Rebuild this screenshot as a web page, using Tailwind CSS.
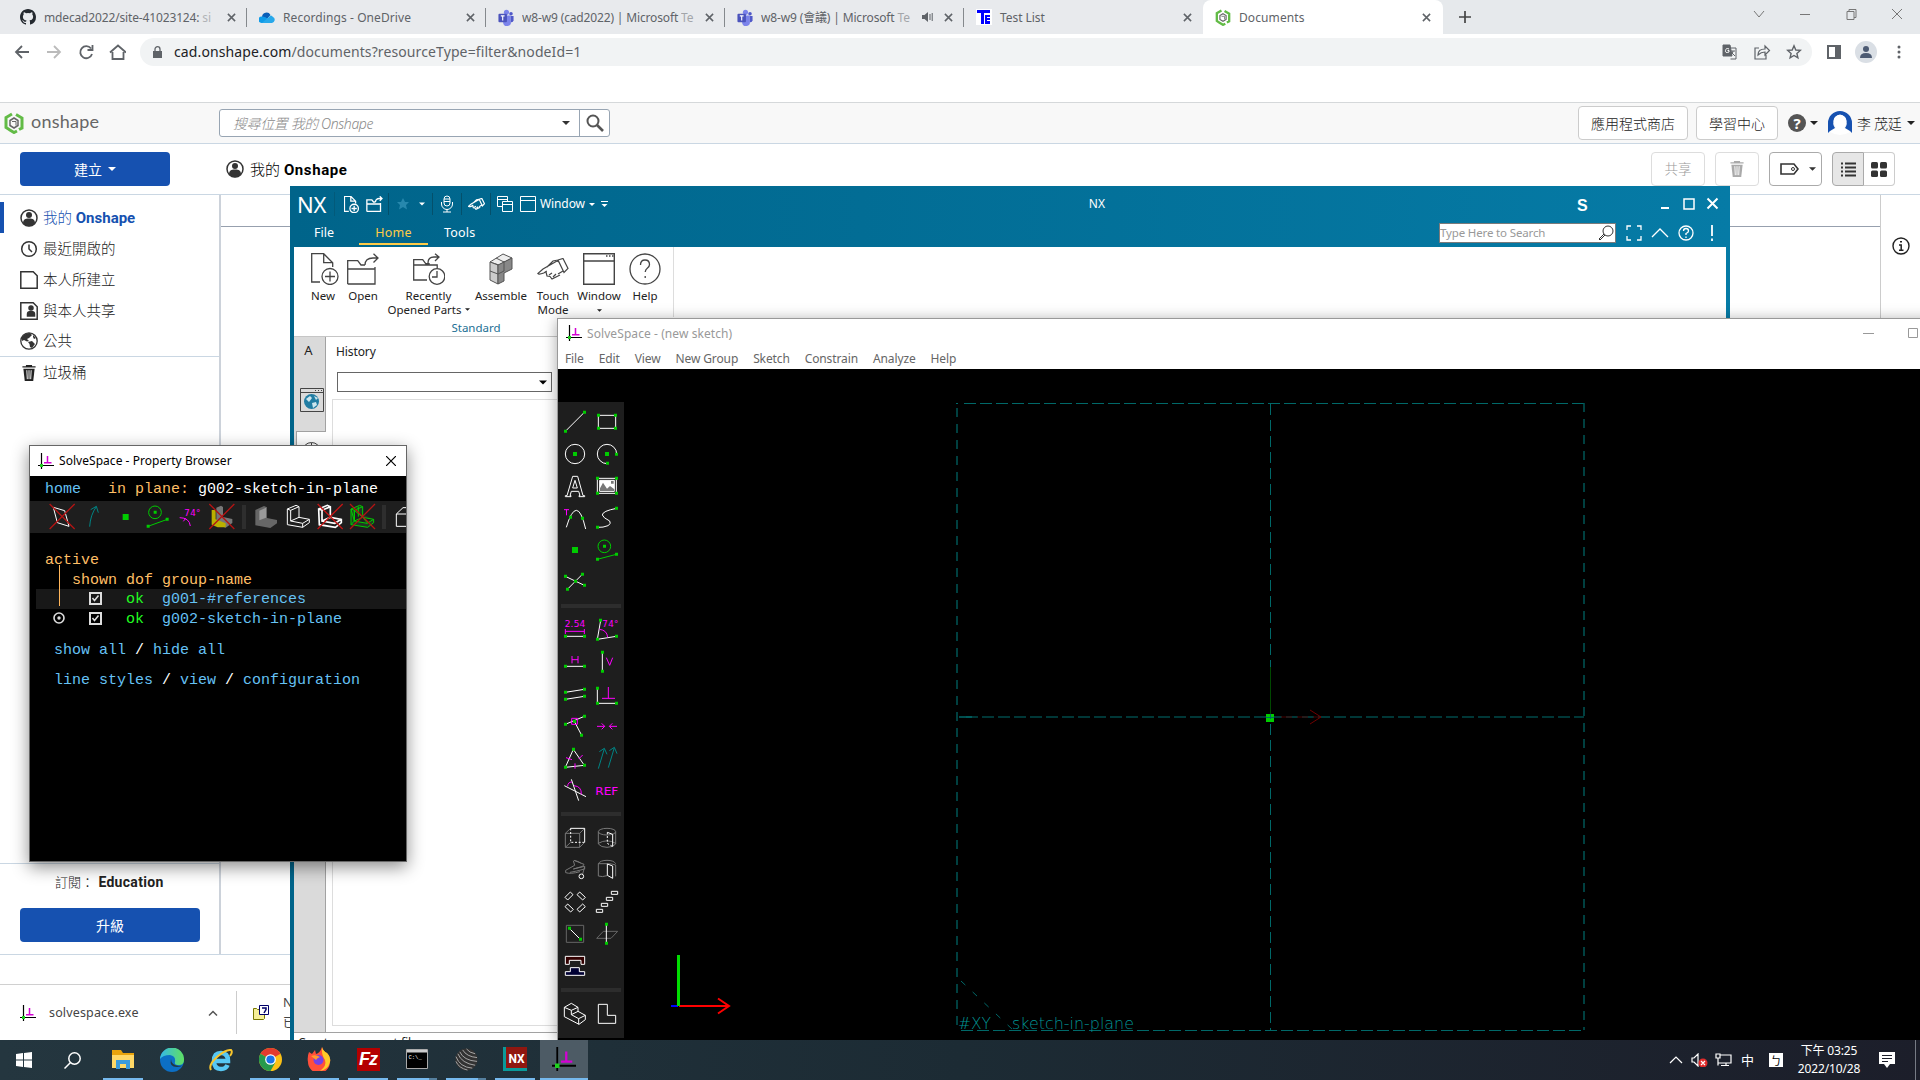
<!DOCTYPE html>
<html lang="zh-Hant">
<head>
<meta charset="utf-8">
<title>Documents</title>
<script src="https://cdn.jsdelivr.net/npm/@tailwindcss/browser@4"></script>
</head>
<body class="bg-white overflow-hidden">
<svg width="0" height="0" class="absolute">
  <defs>
    <symbol id="x" viewBox="0 0 10 10"><path d="M1 1l8 8M9 1l-8 8" fill="none" stroke="currentColor" stroke-width="1.7"/></symbol>
    <symbol id="caret" viewBox="0 0 8 4"><path d="M0 0h8l-4 4z" fill="currentColor"/></symbol>
    <symbol id="solve" viewBox="0 0 16 16"><path d="M3.5 0V16M0 12.5H16" stroke="#000" stroke-width="1.2" fill="none"/><path d="M9.5 3v7M6 9.800h7.500" stroke="#d400d4" stroke-width="1.5"/><path d="M2 11h3v3H2z" fill="#1fd11f"/></symbol>
    <symbol id="teams" viewBox="0 0 16 18"><circle cx="13.300" cy="5" r="1.900" fill="#5059c9"/><circle cx="8.500" cy="3.500" r="2.700" fill="#7b83eb"/><path d="M5 7h8v6a4 4 0 0 1-8 2z" fill="#7b83eb"/><path d="M13 7.500h3v4.500a2.500 2.500 0 0 1-3 2z" fill="#5059c9"/><rect y="5" width="9" height="9" rx="1" fill="#4b53bc"/><path d="M2.500 7.300h4M4.500 7.300v5" stroke="#fff" stroke-width="1.200"/></symbol>
    <symbol id="oshape" viewBox="0 0 20 22"><path d="M8 2L2 5.500v10L6 18M12 2.500l6 3.500v10l-3 1.500M5 17.500l5 3 3-1.500" fill="none" stroke="#62bb46" stroke-width="3"/><path d="M10 6l4 2.500v5L10 16l-4-2.500v-5z" fill="none" stroke="#666" stroke-width="1.500"/><path d="M8 9.500h4v4" fill="none" stroke="#666"/></symbol>
    <symbol id="user" viewBox="0 0 18 18"><circle cx="9" cy="9" r="8" fill="#fff" stroke="#333" stroke-width="1.500"/><circle cx="9" cy="6" r="3" fill="#333"/><path d="M3 14.500c0-4 2-5 6-5s6 1 6 5a8 8 0 0 1-12 0z" fill="#333"/></symbol>
    <symbol id="trash" viewBox="0 0 14 17"><path d="M0 2h14M4.500 2V.7h5V2" fill="none" stroke="currentColor" stroke-width="1.500"/><path d="M1 4h12l-1.500 13h-9z" fill="currentColor"/><path d="M4.700 5.500l.5 9.500M7 5.500V15M9.300 5.500l-.5 9.500" stroke="#fff" stroke-width="1"/></symbol>
    <symbol id="filenew" viewBox="0 0 28 32"><g fill="none" stroke="currentColor" stroke-width="1.3"><path vector-effect="non-scaling-stroke" d="M9 29H.7V.7h12l9 9V14M12.700.7v9h9"/><circle vector-effect="non-scaling-stroke" cx="19" cy="23.500" r="8"/><path vector-effect="non-scaling-stroke" d="M19 18.500v10M14 23.500h10"/></g></symbol>
    <symbol id="fileopen" viewBox="0 0 32 32"><path vector-effect="non-scaling-stroke" d="M.7 31V7.700h10L14 12h4M.7 16h27M28 14v17H.7M18 12q0-7 8-7h5M26.500.7L31 5l-4.500 4.500" fill="none" stroke="currentColor" stroke-width="1.3"/></symbol>
    <symbol id="win" viewBox="0 0 32 32"><path d="M.7.7h30.600v30.600H.7zM.7 8h30.600" fill="none" stroke="currentColor" stroke-width="1.400"/><path d="M23 3h1.500M26 3h1.500M29 3h1.500" stroke="currentColor" stroke-width="1.500"/></symbol>
    <symbol id="hand" viewBox="0 0 32 22"><path vector-effect="non-scaling-stroke" d="M20 3L6 11 .8 15.500q1 1.500 6-.5l3-2M9 14l1 4 3 .5 2 2.500 8-4M21 2l5-1.500 5 10-4 4zM20 3l2 1M10 9l6-6 5-1M12 17l3-2M16 19l3-3M21 16l5-3" fill="none" stroke="currentColor" stroke-width="1.2"/></symbol>
  </defs>
</svg>

<main class="relative h-[1080px] w-[1920px] overflow-hidden bg-white font-['Noto_Sans','Noto_Sans_CJK_TC',sans-serif]">

<!-- Browser -->
<section class="flex h-[1040px] flex-col">
  <div class="flex h-[34px] items-stretch bg-[#e6e9ec] text-[12px] tracking-[-0.15px] text-[#5f6368]">
    <div class="flex bg-[#e8eaed] pl-2">
      <div class="relative flex w-[239px] items-center pl-3">
        <svg class="size-4 shrink-0" viewBox="0 0 16 16"><path fill="#24292f" d="M8 0C3.580 0 0 3.580 0 8c0 3.540 2.290 6.530 5.470 7.590.4.070.55-.17.55-.38v-1.330c-2.220.49-2.690-1.070-2.690-1.070-.36-.92-.89-1.170-.89-1.170-.72-.5.060-.48.060-.48.800.060 1.220.82 1.220.82.72 1.220 1.870.87 2.330.66.070-.52.280-.87.5-1.070-1.780-.2-3.640-.89-3.640-3.950 0-.88.310-1.590.82-2.150-.08-.2-.36-1.020.08-2.120 0 0 .67-.21 2.200.82a7.600 7.600 0 0 1 4 0c1.530-1.030 2.200-.82 2.200-.82.440 1.100.160 1.920.08 2.120.51.560.82 1.270.82 2.150 0 3.070-1.870 3.750-3.650 3.950.29.250.54.730.54 1.480v2.160c0 .21.150.46.55.38A8 8 0 0 0 16 8c0-4.420-3.580-8-8-8z"/></svg>
        <span class="ml-2 w-[176px] overflow-hidden whitespace-nowrap pt-px">mdecad2022/site-41023124: <span class="opacity-40">si</span></span>
        <svg class="ml-[7px] size-[9px]"><use href="#x"/></svg>
        <i class="absolute right-0 top-2 h-[19px] w-px bg-[#85898d]"></i>
      </div>
      <div class="relative flex w-[239px] items-center pl-3">
        <svg class="h-[11px] w-4 shrink-0" viewBox="0 0 16 11"><path fill="#0a5fb8" d="M3 5a4.500 4.500 0 0 1 8.500-2L8 7z"/><path fill="#0f9be8" d="M2.500 11A3 3 0 0 1 3 4.500Q6 4 9 7l4 4z"/><path fill="#28a8ea" d="M4 10l6-5q2-3 4 0a3.200 3.200 0 0 1-1 6H3z"/></svg>
        <span class="ml-2 w-[176px] overflow-hidden whitespace-nowrap pt-px tracking-[0.08px]">Recordings - OneDrive</span>
        <svg class="ml-[7px] size-[9px]"><use href="#x"/></svg>
        <i class="absolute right-0 top-2 h-[19px] w-px bg-[#85898d]"></i>
      </div>
      <div class="relative flex w-[239px] items-center pl-3">
        <svg class="h-[17px] w-4 shrink-0"><use href="#teams"/></svg>
        <span class="ml-2 w-[176px] overflow-hidden whitespace-nowrap pt-px">w8-w9 (cad2022) | Microsoft <span class="opacity-50">Te</span></span>
        <svg class="ml-[7px] size-[9px]"><use href="#x"/></svg>
        <i class="absolute right-0 top-2 h-[19px] w-px bg-[#85898d]"></i>
      </div>
      <div class="relative flex w-[239px] items-center pl-3">
        <svg class="h-[17px] w-4 shrink-0"><use href="#teams"/></svg>
        <span class="ml-2 w-[155px] overflow-hidden whitespace-nowrap pt-px">w8-w9 (會議) | Microsoft <span class="opacity-50">Te</span></span>
        <svg class="ml-[6px] h-[10px] w-[11px]" viewBox="0 0 11 10"><path fill="#5f6368" d="M0 3h2.500L6 0v10L2.500 7H0zM7.500 2h1v6h-1zM9.700 1h1v8h-1z"/></svg>
        <svg class="ml-[11px] size-[9px] shrink-0"><use href="#x"/></svg>
        <i class="absolute right-0 top-2 h-[19px] w-px bg-[#85898d]"></i>
      </div>
      <div class="relative flex w-[239px] items-center pl-3">
        <svg class="size-4 shrink-0" viewBox="0 0 16 16"><path fill="#fff" d="M0 0h16v16H0z"/><path fill="#00f" d="M1 1h13v3H8v11H5V4H1zM9 6h5v2h-3v1h3v2h-3v1h3v3H9z"/></svg>
        <span class="ml-2 w-[176px] pt-px tracking-[-0.05px]">Test List</span>
        <svg class="ml-[7px] size-[9px]"><use href="#x"/></svg>
      </div>
    </div>
    <div class="flex w-[240px] items-center rounded-t-lg bg-white pl-3">
      <svg class="h-[17px] w-4 shrink-0"><use href="#oshape"/></svg>
      <span class="ml-2 w-[176px] pt-px tracking-[0.1px]">Documents</span>
      <svg class="ml-[7px] size-[9px]"><use href="#x"/></svg>
    </div>
    <svg class="ml-4 mt-[11px] size-3" viewBox="0 0 12 12"><path d="M6 0v12M0 6h12" stroke="#444" stroke-width="1.700"/></svg>
    <svg class="ml-auto mr-[17px] mt-2 h-3 w-[150px]" viewBox="0 0 150 12" fill="none" stroke="#777"><path d="M1 3l5 6 5-6M47 6.500h10M94 3.500h7v8h-7zM96 3.500v-2h7v8h-2M139 1l10 10M149 1l-10 10"/></svg>
  </div>

  <div class="flex h-[68px] items-start pl-[14px] pt-1">
    <svg class="mt-[6px] h-4 w-[112px]" viewBox="0 0 112 16" fill="none" stroke="#5f6368" stroke-width="1.800"><path d="M15 8H2M8 2L2 8l6 6"/><path stroke="#bbb" d="M33 8h13M40 2l6 6-6 6"/><path d="M77 4.500A6 6 0 1 0 78 10M78.500 1v5h-5"/><path d="M96 8.500l8-7 8 7M98.500 8v7h11V8"/></svg>
    <div class="ml-[14px] flex h-7 w-[1672px] items-center rounded-full bg-[#f1f3f4] pl-[13px] text-[14px] tracking-[0.11px] text-[#5f6368]">
      <svg class="h-3 w-[9px]" viewBox="0 0 9 12"><path d="M0 5h9v7H0z" fill="#5f6368"/><path d="M2 5V3.200a2.500 2.500 0 0 1 5 0V5" fill="none" stroke="#5f6368" stroke-width="1.300"/></svg>
      <span class="ml-3 whitespace-nowrap pb-[2px]"><span class="text-[#202124]">cad.onshape.com</span>/documents?resourceType=filter&amp;nodeId=1</span>
      <svg class="ml-auto mr-[10px] h-4 w-[80px]" viewBox="0 0 80 16" fill="none" stroke="#5f6368"><path d="M1 1h7l2 11H1z" fill="#5f6368"/><path d="M8 4h6v11H8.500M9 7h4M11 7q0 3-3 5M9 8l4 4"/><path d="M7 5q-3-1.500-3.500 1.500T7 8V6.500H5.500" stroke="#fff"/><path stroke-width="1.200" d="M37 4h-4v11h11v-4M36 11q0-6 7-6V2l4.500 4.500L43 11V8q-4 0-7 3z"/><path stroke-width="1.400" d="M72 1.800l1.800 4.200 4.500.4-3.400 3 1 4.500-3.900-2.400-3.900 2.400 1-4.500-3.400-3 4.500-.4z"/></svg>
    </div>
    <svg class="ml-[15px] mt-[7px] size-[14px]" viewBox="0 0 14 14"><path d="M1 1h12v12H1z" fill="none" stroke="#5f6368" stroke-width="2"/><path d="M8 1h5v12H8z" fill="#5f6368"/></svg>
    <svg class="ml-[14px] mt-[3px] size-[22px]" viewBox="0 0 22 22"><circle cx="11" cy="11" r="11" fill="#dadfe5"/><circle cx="11" cy="8" r="3" fill="#4d5b73"/><path d="M5 17q0-5 6-5t6 5z" fill="#4d5b73"/></svg>
    <svg class="ml-5 mt-[7px] h-[14px] w-1" viewBox="0 0 4 14" fill="#5f6368"><circle cx="2" cy="2" r="1.500"/><circle cx="2" cy="7" r="1.500"/><circle cx="2" cy="12" r="1.500"/></svg>
  </div>

  <header class="flex h-[42px] items-center border-y border-t-[#d5d8da] border-b-[#cad7e3] bg-[#f8f8f8]">
    <svg class="ml-1 h-[22px] w-5"><use href="#oshape"/></svg>
    <span class="ml-[7px] w-[70px] pb-1 text-[18px] tracking-[0.25px] text-[#666] font-['Lato']">onshape</span>
    <div class="ml-[118px] flex h-7 w-[391px] rounded-[3px] border border-[#98a5b3] bg-white">
      <span class="flex w-[359px] items-center pl-[13px] text-[14px] font-light tracking-[-0.4px] text-[#8a8a8a]"><em>搜尋位置 我的 Onshape</em><svg class="ml-auto mr-[9px] h-1 w-2 text-[#333]"><use href="#caret"/></svg></span>
      <span class="flex flex-1 items-center justify-center border-l border-[#98a5b3]"><svg class="size-[18px]" viewBox="0 0 18 18" fill="none" stroke="#555"><circle cx="7" cy="7" r="5.500" stroke-width="2"/><path d="M11 11l6 6" stroke-width="2.700"/></svg></span>
    </div>
    <div class="ml-auto flex items-center text-[14px] font-light text-[#222]">
      <span class="flex h-[34px] w-[110px] items-center justify-center rounded border border-[#ccc] bg-white">應用程式商店</span>
      <span class="ml-2 flex h-[34px] w-[82px] items-center justify-center rounded border border-[#ccc] bg-white">學習中心</span>
      <span class="ml-[10px] flex size-[18px] items-center justify-center rounded-full bg-[#555] text-[15px] font-bold text-white">?</span>
      <svg class="ml-1 h-1 w-2"><use href="#caret"/></svg>
      <svg class="ml-[10px] size-6" viewBox="0 0 24 24"><path fill="#1651b0" d="M0 22V12a12 12 0 0 1 24 0v10l-2-2-5-3q3-4 1-9-2-4-6-4T6 8q-2 5 1 9l-5 3z"/><path fill="#fff" d="M2 21l6-4q-4-7-1-11 5-5 10 0 3 4-1 11l6 4q-10 6-20 0z"/></svg>
      <span class="ml-[5px] w-[50px] whitespace-nowrap tracking-[-0.3px]">李 茂廷</span>
      <svg class="mr-[5px] h-1 w-2"><use href="#caret"/></svg>
    </div>
  </header>

  <div class="flex h-[51px] items-center border-b border-[#cad7e3] pl-5 text-[15px]">
    <button class="flex h-[34px] w-[150px] items-center justify-center gap-[6px] rounded bg-[#1651b0] text-[14px] text-white">建立<svg class="h-1 w-2"><use href="#caret"/></svg></button>
    <svg class="ml-14 size-[18px]"><use href="#user"/></svg>
    <span class="ml-[6px] whitespace-nowrap pt-[2px] text-[15px] font-light text-black">我的 <b class="font-['Roboto'] font-bold tracking-[0.6px]">Onshape</b></span>
    <div class="ml-auto mr-[25px] flex">
      <span class="flex h-[34px] w-[54px] items-center justify-center rounded border border-[#ddd] text-[13.500px] font-light text-[#999]">共享</span>
      <span class="ml-[10px] flex h-[34px] w-[44px] items-center justify-center rounded border border-[#ddd] text-[#aaa]"><svg class="h-4 w-[14px]"><use href="#trash"/></svg></span>
      <span class="ml-[10px] flex h-[34px] w-[53px] items-center justify-center gap-[10px] rounded border border-[#aaa] text-[#333]"><svg class="ml-1 h-3 w-[19px]" viewBox="0 0 19 12"><path d="M1 1h13l4 5-4 5H1z" fill="none" stroke="#333" stroke-width="1.600"/><circle cx="13" cy="6" r="1.500" fill="none" stroke="#333"/></svg><svg class="h-1 w-[7px]"><use href="#caret"/></svg></span>
      <span class="ml-[10px] flex h-[34px] w-8 items-center justify-center rounded-l border border-[#aaa] bg-[#e6e6e6]"><svg class="size-[15px]" viewBox="0 0 15 15"><path d="M0 1.500h2M4 1.500h11M0 5.500h2M4 5.500h11M0 9.500h2M4 9.500h11M0 13.500h2M4 13.500h11" stroke="#333" stroke-width="2"/></svg></span>
      <span class="flex h-[34px] w-[31px] items-center justify-center rounded-r border border-l-0 border-[#ccc]"><svg class="h-[15px] w-4" viewBox="0 0 16 15" fill="#333"><rect width="7" height="6.500" rx="1.500"/><rect x="9" width="7" height="6.500" rx="1.500"/><rect y="8.500" width="7" height="6.500" rx="1.500"/><rect x="9" y="8.500" width="7" height="6.500" rx="1.500"/></svg></span>
    </div>
  </div>

  <div class="flex h-[760px] border-b border-[#cad7e3]">
    <nav class="flex w-[221px] flex-col border-r-2 border-[#ccd2da] pt-[7px] text-[14.500px] font-light text-[#222]">
      <div class="flex h-[31px] items-center border-l-4 border-[#1651b0] pl-4 text-[#1651b0]"><svg class="mr-[5px] size-[18px]"><use href="#user"/></svg><span class="pt-[2px]">我的 <b class="font-['Roboto'] text-[15px] font-bold">Onshape</b></span></div>
      <div class="flex h-[31px] items-center pl-5"><svg class="mr-[5px] size-[18px]" viewBox="0 0 18 18" fill="none" stroke="#333" stroke-width="1.500"><circle cx="9" cy="9" r="7.300"/><path d="M9 4.500V9l3 3"/></svg>最近開啟的</div>
      <div class="flex h-[31px] items-center pl-5"><svg class="mr-[5px] size-[18px]" viewBox="0 0 18 18" fill="none" stroke="#333" stroke-width="1.500"><path d="M.8.8h12.400l4 4v12.400H.8z"/></svg>本人所建立</div>
      <div class="flex h-[31px] items-center pl-5"><svg class="mr-[5px] size-[18px]" viewBox="0 0 18 18" fill="none" stroke="#333" stroke-width="1.500"><path d="M.8.8h12.400l4 4v12.400H.8z"/><circle cx="11" cy="6" r="2" fill="#333"/><path d="M7.500 14v-2q0-2.500 3.500-2.500t3.500 2.500v2z" fill="#333"/></svg>與本人共享</div>
      <div class="flex h-[30px] items-center pl-5"><svg class="mr-[5px] size-[18px]" viewBox="0 0 18 18"><circle cx="9" cy="9" r="8.200" fill="#fff" stroke="#333" stroke-width="1.300"/><path fill="#333" d="M2 5q3-4 8-4l2 2-3 3-2 1 2 2-2 .5L4 8 2 9zM8 10l4-1 3 3-3 4-2-1-.5-3zM13 3l3 3-2 1-1-2z"/></svg>公共</div>
      <div class="flex h-8 items-center border-t border-[#cad7e3] pl-5"><svg class="ml-[2px] mr-[7px] h-4 w-[14px]"><use href="#trash"/></svg>垃圾桶</div>
      <div class="mt-auto flex h-[91px] flex-col border-t border-[#cad7e3] pt-2">
        <div class="pl-[55px] pt-px text-[13px] leading-[19px]">訂閱： <b class="ml-px font-['Roboto'] text-[14px] font-bold tracking-[0.300px]">Education</b></div>
        <button class="ml-5 mt-[16px] h-[34px] w-[180px] shrink-0 rounded bg-[#1651b0] text-[14px] font-normal text-white">升級</button>
      </div>
    </nav>
    <div class="flex-1"><div class="h-8 border-b border-[#97a0ae]"></div></div>
    <aside class="flex w-10 justify-center border-l border-[#ccc] pt-[42px]"><svg class="size-[18px]" viewBox="0 0 18 18"><circle cx="9" cy="9" r="8" fill="none" stroke="#222" stroke-width="1.400"/><path d="M8 4.800h2M7 8h2.200v5M7 13.200h4.500" stroke="#222" stroke-width="1.500" fill="none"/></svg></aside>
  </div>
  <div class="mt-[29px] flex flex-1 items-center border-t border-[#d0d0d0] pl-5 text-[12.500px] text-[#444]">
    <svg class="size-4"><use href="#solve"/></svg>
    <span class="ml-[13px] w-[159px] pt-px tracking-[0.15px]">solvespace.exe</span>
    <svg class="h-[6px] w-[10px]" viewBox="0 0 10 6"><path d="M1 5.500l4-4 4 4" stroke="#555" stroke-width="1.500" fill="none"/></svg>
    <i class="ml-[18px] h-[43px] w-px bg-[#ccc]"></i>
    <svg class="ml-4 size-4" viewBox="0 0 16 16"><path d="M.5 3.500h3l1 1h7v9l-1 1H.5z" fill="#f6ef98" stroke="#770"/><path d="M6.500.5h9v9h-9z" fill="#fff" stroke="#00006a"/><path d="M9 3h4v1.500L11 8" fill="none" stroke="#00006a" stroke-width="1.500"/></svg>
    <span class="ml-[14px] leading-5">N<br>已</span>
  </div>
</section>

<!-- NX -->
<section class="absolute left-[290px] top-[186px] flex h-[854px] w-[1440px] flex-col overflow-hidden border-x-4 border-l-[#00648a] border-r-[#067ba6] bg-white">
  <div class="-mx-1 h-[61px] shrink-0 bg-linear-to-r from-[#00648a] to-[#067ba6] text-white">
    <div class="flex h-9 items-center">
      <div class="flex w-[1000px] items-center">
        <span class="ml-[7px] w-[37px] text-[22px] tracking-[-0.2px]">NX</span>
        <svg class="h-6 w-[205px]" viewBox="0 0 205 24"><path d="M0 0v24M54.500 1v22M98.500 1v22M127.500 1v22M156.500 1v22" stroke="#04506b"/><g fill="none" stroke="#fff"><svg x="10" y="4" width="15" height="17" class="text-white"><use href="#filenew"/></svg><svg x="32" y="4" width="17" height="16" class="text-white"><use href="#fileopen"/></svg><rect x="110" y="4" width="6" height="10" rx="3"/><path d="M107.500 10v2a5.500 5.500 0 0 0 11 0v-2M113 17v3M109 20h8M110 7h6M110 9.500h6"/><svg x="134" y="6" width="17" height="12" class="text-white"><use href="#hand"/></svg><path d="M163.500 4.500h10v10h-10zM163.500 7.500h10" /><path fill="#00688d" d="M168.500 9.500h10v10h-10zM168.500 12.500h10"/><path d="M186.500 4.500h15v15h-15zM186.500 8.500h15"/></g><path fill="#2788ad" d="M69 6l2 4h4l-3 3 1 4.500-4-2.500-4 2.500 1-4.500-3-3h4z"/><path fill="#fff" d="M85 10.500h6l-3 3z"/></svg>
        <span class="ml-px text-[12px] tracking-[-0.1px]">Window</span><svg class="ml-[4px] h-[3px] w-[6px]"><use href="#caret"/></svg><svg class="ml-[6px] size-[7px]" viewBox="0 0 7 7"><path d="M0 .5h7" stroke="#fff"/><path d="M.5 3h6l-3 3z" fill="#fff"/></svg>
        <span class="ml-auto mr-[185px] text-[12px]">NX</span>
      </div>
      <b class="ml-[287px] pt-[3px] text-[16px] font-['Liberation_Sans']">S</b>
      <svg class="ml-[72px] h-[14px] w-[60px]" viewBox="0 0 60 14" fill="none" stroke="#fff"><path d="M1 11h8" stroke-width="2"/><path d="M24 2h10v10H24z" stroke-width="1.500"/><path d="M47.500 1.500l10 10M57.500 1.500l-10 10" stroke-width="2"/></svg>
    </div>
    <div class="flex h-[25px] items-stretch text-[12.500px]">
      <span class="ml-6 w-[45px] pt-[2px]">File</span>
      <span class="h-[23px] w-[69px] border-b-2 border-[#ffcb47] pt-[2px] text-center tracking-[0.2px] text-[#ffcb47]">Home</span>
      <span class="ml-4 pt-[2px] tracking-[0.2px]">Tools</span>
      <span class="ml-auto mr-2 mt-px flex h-5 w-[177px] items-center border border-[#7b7b7b] bg-white text-[11.500px] tracking-[-0.15px] text-[#999]">Type Here to Search<svg class="ml-auto mr-[1px] size-4" viewBox="0 0 16 16" fill="none" stroke="#333"><circle cx="10" cy="6" r="5"/><path d="M7 10l-5 5-1-1 5-5"/></svg></span>
      <svg class="mr-4 mt-[3px] h-4 w-[90px]" viewBox="0 0 90 16" fill="none" stroke="#fff" stroke-width="1.300"><path d="M3 5V1h4M13 1h4v4M17 11v4h-4M7 15H3v-4M28 12l8-8 8 8"/><circle cx="62" cy="8" r="7"/><path d="M59.500 6q0-2.500 2.500-2.500T64.500 6q0 1.500-2.500 2.500V10M62 11.500V13"/><path stroke-width="1.8" d="M88 0v11M88 13.500V16"/></svg>
    </div>
  </div>
  <div class="h-[90px] shrink-0 border-b border-[#c6c6c6] text-[11.500px] leading-[14px] text-[#222]">
    <div class="flex h-[70px] w-[380px] items-start border-r border-[#ddd] text-center">
      <div class="flex w-[58px] shrink-0 flex-col items-center pt-[6px]"><svg class="ml-[4px] h-8 w-7 text-[#444]"><use href="#filenew"/></svg><span class="mt-[4px]">New</span></div>
      <div class="flex w-[22px] shrink-0 flex-col items-center pt-[6px]"><svg class="h-8 w-8 text-[#444]"><use href="#fileopen"/></svg><span class="mt-[4px]">Open</span></div>
      <div class="flex w-[109px] shrink-0 flex-col items-center whitespace-nowrap pt-[6px]"><svg class="h-8 w-8 text-[#444]" viewBox="0 0 32 32"><path d="M14 27H.7V6.700h9l3 4h4M.7 12h23.500v3M15 10q0-6 6-6h5M22 .7L26 4l-4 4" fill="none" stroke="currentColor" stroke-width="1.300"/><circle cx="24" cy="23.500" r="7.800" fill="#fff" stroke="currentColor" stroke-width="1.300"/><path d="M24 18v6h-5" fill="none" stroke="currentColor" stroke-width="1.300"/></svg><span class="mt-[4px]">Recently<br>Opened Parts <svg class="inline h-[3px] w-[5px] -translate-y-px"><use href="#caret"/></svg></span></div>
      <div class="flex w-[36px] shrink-0 flex-col items-center pt-[6px]"><svg class="h-8 w-6" viewBox="0 0 24 32" stroke="#555"><path fill="#eee" d="M1 9L14 1l9 4-13 7z"/><path fill="#ccc" d="M1 9l8 3v19l-8-4z"/><path fill="#888" d="M9 12l14-7v11l-8 4v8l-6 3z"/><path fill="none" d="M1 18l8 3 6-3V8M7 5l8 4"/></svg><span class="mt-[4px]">Assemble</span></div>
      <div class="flex w-[68px] shrink-0 flex-col items-center pt-[6px]"><span class="flex h-8 items-center"><svg class="h-[22px] w-8 text-[#444]"><use href="#hand"/></svg></span><span class="mt-[4px]">Touch<br>Mode</span></div>
      <div class="flex w-[24px] shrink-0 flex-col items-center pt-[6px]"><svg class="h-8 w-8 text-[#444]"><use href="#win"/></svg><span class="mt-[4px]">Window</span><svg class="mt-[6px] h-[3px] w-[5px]"><use href="#caret"/></svg></div>
      <div class="flex w-[62px] shrink-0 flex-col items-center pl-[6px] pt-[6px]"><svg class="h-8 w-8 text-[#444]" viewBox="0 0 32 32" fill="none" stroke="currentColor" stroke-width="1.300"><circle cx="16" cy="16" r="15"/><path d="M11.500 12q0-5 4.500-5t4.500 4.500q0 2-2 3.500t-2.300 4M16.200 23v2"/></svg><span class="mt-[4px]">Help</span></div>
    </div>
    <div class="mt-[4px] w-[364px] text-center text-[#1c6f94]">Standard</div>
  </div>
  <div class="flex min-h-0 flex-1">
    <div class="flex w-8 flex-col items-center border-r border-[#a2a2a2] bg-[#dadada]">
      <span class="mr-[2px] h-[51px] pt-[4px] text-[13px] text-[#222]">A</span>
      <svg class="ml-1 h-6 w-6 shrink-0" viewBox="0 0 24 24"><path d="M.5.500h23v23H.5zM.5 4.500h23" fill="none" stroke="#444"/><path d="M15 2.500h1M18 2.500h1M21 2.500h1" stroke="#444"/><circle cx="11.500" cy="13.500" r="7.500" fill="#217da3"/><path d="M6 11l4-3 2 2-3 4zM12 15l4-1 1 3-4 3zM14 8l4 2-2 2z" fill="#cde6ee"/></svg>
      <div class="ml-[2px] mt-[19px] flex h-12 w-[30px] shrink-0 justify-center border-l border-t border-[#a2a2a2] bg-white pt-[10px]"><svg class="size-[19px]" viewBox="0 0 19 19" fill="none" stroke="#444"><circle cx="9.500" cy="9.500" r="9"/><path d="M9.500 1v9"/></svg></div>
    </div>
    <div class="flex flex-1 flex-col">
      <div class="pl-[10px] pt-[7px] text-[12px] leading-4 tracking-[-0.1px] text-[#222]">History</div>
      <div class="ml-[11px] mt-3 flex h-5 w-[215px] items-center justify-end border border-[#666] pr-1"><svg class="h-[5px] w-2"><use href="#caret"/></svg></div>
      <div class="ml-[6px] mt-[7px] flex-1 border border-r-0 border-[#ddd]"></div>
      <div class="h-[6px]"></div>
    </div>
  </div>
  <div class="h-2 shrink-0 overflow-hidden border-t border-[#a2a2a2] pl-1 text-[12px] leading-[20px] text-[#222]">Create a new part file</div>
</section>

<!-- SolveSpace sketch window -->
<section class="absolute left-[557px] top-[318px] flex h-[722px] w-[1400px] flex-col border-l border-t border-[#999] bg-white shadow-[0_2px_14px_rgba(0,0,0,0.35)]">
  <div class="flex h-7 items-center pl-2 text-[12px] text-[#999]">
    <svg class="size-4"><use href="#solve"/></svg><span class="ml-[5px] pt-[2px] tracking-[0.08px]">SolveSpace - (new sketch)</span>
    <svg class="ml-auto mr-[38px] h-3 w-[56px]" viewBox="0 0 56 12" fill="none" stroke="#999"><path d="M0 6.500h11M45.500 1.500h9v9h-9z"/></svg>
  </div>
  <div class="flex h-[22px] items-center gap-[15px] pl-[7px] pt-[2px] text-[12px] tracking-[-0.12px] text-[#666]">
    <span>File</span><span>Edit</span><span>View</span><span>New Group</span><span>Sketch</span><span>Constrain</span><span>Analyze</span><span>Help</span>
  </div>
  <div class="relative flex-1 bg-black">
    <svg class="absolute left-0 top-0 h-[671px] w-[1362px]" viewBox="558 369 1362 671" fill="none">
      <g stroke="#006868"><path stroke-dasharray="12 4" d="M964 403.500H1584M961 1030.500H1584"/><path d="M956 403.500h2"/><path stroke="#005656" stroke-width="1.500" stroke-dasharray="9 7" d="M957 408V1030M1584 403V1030"/><path stroke-dasharray="11 5" d="M1270.500 404V1030"/><path stroke="#004a4a" stroke-width="1.500" stroke-dasharray="12 4" d="M966 717H1584"/><path stroke-width="1.500" d="M959 717H972"/><path stroke-dasharray="6 10" d="M961 981l52 49"/></g>
      <path stroke="#004800" d="M1270.500 667v50"/><path stroke="#4a0000" stroke-dasharray="11 5" d="M1281 717h40"/><path stroke="#700000" d="M1310 710l11 7-11 7"/>
      <path fill="#0c0" d="M1266 714h8v8h-8z"/><path stroke="#066" d="M1266 717.500h8M1270.500 714v5"/>
      <g fill="#009494" font-family="DejaVu Sans ExtraLight, DejaVu Sans, Liberation Sans" font-weight="200" font-size="16"><text x="958" y="1029" textLength="33" lengthAdjust="spacingAndGlyphs">#XY</text><text x="1012" y="1029" textLength="122" lengthAdjust="spacingAndGlyphs">sketch-in-plane</text></g>
      <path stroke="#00f" stroke-width="2" d="M671 1006h7"/><path stroke="#f00" stroke-width="2" d="M679 1006h50M718 998.500l11 7.500-11 7.500"/><path stroke="#0d0" stroke-width="3" d="M678.500 955v51"/>
    </svg>
    <div class="absolute left-0 top-[33px] h-[636px] w-[66px] bg-[#1e1e1e] pl-px pt-1">
      <div class="grid w-16 grid-cols-2">
        <svg class="size-8" viewBox="27 288 96 96" fill="none" stroke="#fff" stroke-width="3"><path d="M46 364l57-57"/><path stroke="#0c0" stroke-width="9" d="M42 364h9M99 307h9"/></svg>
        <svg class="size-8" viewBox="123 288 96 96" fill="none" stroke="#fff" stroke-width="3"><path d="M145 316h52v39h-52z"/><path stroke="#0c0" stroke-width="9" d="M141 316h9M192 316h9M141 355h9M192 355h9"/></svg>
        <svg class="size-8" viewBox="27 384 96 96" fill="none" stroke="#fff" stroke-width="3"><circle cx="75" cy="432" r="29"/><path stroke="#0c0" stroke-width="12" d="M69 432h12"/></svg>
        <svg class="size-8" viewBox="123 384 96 96" fill="none" stroke="#fff" stroke-width="3"><path d="M200 432a29 29 0 1 0-29 29"/><path stroke="#0c0" stroke-width="12" d="M165 432h12"/><path stroke="#0c0" stroke-width="9" d="M195 433h9M168 460h9"/></svg>
        <svg class="size-8" viewBox="27 480 96 96" fill="none" stroke="#fff" stroke-width="3"><path d="M46 560v-3h5l17-58h15l16 58h5v3H87v-3h3l-4-13H64l-4 13h3v3zM68 534l7-23 7 23z"/></svg>
        <svg class="size-8" viewBox="123 480 96 96" fill="none" stroke="#fff" stroke-width="3"><path d="M142 505h57v45h-57z"/><path fill="#fff" d="M149 511h44v33h-44z"/><path fill="#777" stroke="none" d="M150 543v-8l9-17 12 18 9-8 13 10v5zM183 513h8v8h-8z"/><path stroke="#0c0" stroke-width="9" d="M138 505h9M195 505h9M138 550h9M195 550h9"/></svg>
        <svg class="size-8" viewBox="27 576 96 96" fill="none" stroke="#fff" stroke-width="3"><path d="M49 652q15-51 30-51t28 56"/><path stroke="#f0f" d="M42 599h15M49.500 599v17"/><path stroke="#0c0" stroke-width="9" d="M57 622h9M93 625h9"/></svg>
        <svg class="size-8" viewBox="123 576 96 96" fill="none" stroke="#fff" stroke-width="3"><path d="M200 595q-43 8-43 20 2 8 22 18 6 8-5 14-14 6-32 5"/><path stroke="#0c0" stroke-width="9" d="M195 595h9M138 652h9"/></svg>
        <svg class="size-8" viewBox="27 672 96 96"><path fill="#0c0" d="M66 711h18v18H66z"/></svg>
        <svg class="size-8" viewBox="123 672 96 96" fill="none" stroke="#0c0" stroke-width="3"><circle cx="163" cy="709" r="19"/><path d="M142 748l57-15"/><path stroke-width="9" d="M159 709h9M138 748h9M195 733h9"/></svg>
        <svg class="size-8" viewBox="27 768 96 96" fill="none" stroke="#fff" stroke-width="3"><path d="M46 799l57 27M97 793l-45 45"/><path stroke="#0c0" stroke-width="9" d="M42 799h9M99 826h9M93 793h9M48 838h9M72 814h9"/></svg>
      </div>
      <div class="my-[6px] ml-[2px] h-1 w-[60px] bg-[#2d2d2d]"></div>
      <div class="grid w-16 grid-cols-2">
        <svg class="size-8" viewBox="27 42 96 96" fill="none" stroke="#fff" stroke-width="3"><path d="M46 109h57"/><path stroke="#f0f" d="M46 94h57M46 87v15M103 87v15"/><text x="44" y="81" fill="#f0f" stroke="none" font-family="DejaVu Sans" font-size="27" textLength="62">2.54</text><path stroke="#0c0" stroke-width="9" d="M42 109h9M99 109h9"/></svg>
        <svg class="size-8" viewBox="123 42 96 96" fill="none" stroke="#fff" stroke-width="3"><path d="M152 61l-10 57 57-9"/><path stroke="#f0f" d="M148 88q23 2 25 24"/><text x="157" y="81" fill="#f0f" stroke="none" font-family="DejaVu Sans" font-size="26" textLength="48">74°</text><path stroke="#0c0" stroke-width="9" d="M147 61h9M138 118h9M195 109h9"/></svg>
        <svg class="size-8" viewBox="27 138 96 96" fill="none" stroke="#fff" stroke-width="3"><path d="M46 199h57"/><path stroke="#f0f" d="M66 168v22M84 168v22M66 179h18"/><path stroke="#0c0" stroke-width="9" d="M42 199h9M99 199h9"/></svg>
        <svg class="size-8" viewBox="123 138 96 96" fill="none" stroke="#fff" stroke-width="3"><path d="M157 157v57"/><path stroke="#f0f" d="M169 173l10 23 9-23"/><path stroke="#0c0" stroke-width="9" d="M153 157h9M153 214h9"/></svg>
        <svg class="size-8" viewBox="27 234 96 96" fill="none" stroke="#fff" stroke-width="3"><path d="M46 277l57-9M46 298l57-9"/><path stroke="#0c0" stroke-width="9" d="M42 277h9M99 268h9M42 298h9M99 289h9"/></svg>
        <svg class="size-8" viewBox="123 234 96 96" fill="none" stroke="#fff" stroke-width="3"><path d="M142 265v45h57"/><path stroke="#f0f" d="M175 261v34M156 295h39"/><path stroke="#0c0" stroke-width="9" d="M138 265h9M138 310h9M195 310h9"/></svg>
        <svg class="size-8" viewBox="27 330 96 96" fill="none" stroke="#fff" stroke-width="3"><path d="M46 373l57-24M73 364l22 42"/><path stroke="#f0f" d="M65 355h17v18H65z"/><path stroke="#0c0" stroke-width="9" d="M42 373h9M99 349h9M90 406h9M69 364h9"/></svg>
        <svg class="size-8" viewBox="123 330 96 96" fill="none" stroke="#f0f" stroke-width="3"><path d="M141 379h24M155 370l9 9-9 9M201 379h-23M187 370l-9 9 9 9"/></svg>
        <svg class="size-8" viewBox="27 426 96 96" fill="none" stroke="#fff" stroke-width="3"><path d="M70 448l33 48-57 6z"/><path stroke="#f0f" d="M48 473l18 6M86 477l12-12M75 490v16"/><path stroke="#0c0" stroke-width="9" d="M66 448h9M99 496h9M42 502h9"/></svg>
        <svg class="size-8" viewBox="123 426 96 96" fill="none" stroke="#008484" stroke-width="3"><path d="M145 506l18-60M148 455l15-10 8 18M175 503l18-60M178 452l15-10 8 19"/></svg>
        <svg class="size-8" viewBox="27 522 96 96" fill="none" stroke="#fff" stroke-width="3"><path d="M43 557l65 33M64 538l22 64"/><path stroke="#f0f" d="M53 559q0-13 13-13M72 557q23 2 22 26"/></svg>
        <svg class="size-8" viewBox="123 522 96 96"><text x="136" y="584" fill="#f0f" font-family="DejaVu Sans" font-size="33" textLength="69" lengthAdjust="spacingAndGlyphs">REF</text></svg>
      </div>
      <div class="my-[6px] ml-[2px] h-1 w-[60px] bg-[#2d2d2d]"></div>
      <div class="grid w-16 grid-cols-2">
        <svg class="size-8" viewBox="27 666 96 96" fill="none" stroke="#777" stroke-width="3"><path d="M46 700h43v42H46zM46 700l16-15M89 742l15-15M89 700l15-15M46 742l16-15"/><path stroke="#fff" d="M62 685h42v42"/><path stroke="#fff" stroke-dasharray="6 5" d="M62 685v42h42"/></svg>
        <svg class="size-8" viewBox="123 666 96 96" fill="none" stroke="#777" stroke-width="3"><ellipse cx="171" cy="695" rx="26" ry="10"/><path d="M145 695v37q8 10 26 10t26-10v-37M145 730q26-15 52 0"/><path stroke="#fff" d="M172 697l16 6v37"/><path stroke="#fff" stroke-dasharray="6 5" d="M172 697v33l16 10"/></svg>
        <svg class="size-8" viewBox="27 762 96 96" fill="none" stroke="#777" stroke-width="3"><path d="M70 782l4 14-27 15v7q15 5 43-3M72 781l30 12-4 6-28 8 34-8v8l-24 6M72 781q16 4 20 8M60 817l20-4M104 800l-6 22"/><circle cx="94" cy="829" r="7" stroke="#fff"/></svg>
        <svg class="size-8" viewBox="123 762 96 96" fill="none" stroke="#777" stroke-width="3"><path d="M145 791q6-10 26-10t26 10M145 791v37q12 4 26-1M145 791h27M172 791q14 0 25 4M197 795v34"/><path stroke="#fff" d="M172 792l16 6v37l-16-9z"/></svg>
        <svg class="size-8" viewBox="27 858 96 96" fill="none" stroke="#fff" stroke-width="3"><path d="M45 892l16-16 8 8-16 16zM81 884l8-8 17 16-8 8zM45 920l8-8 17 16-8 8zM81 928l17-16 8 8-17 16z"/></svg>
        <svg class="size-8" viewBox="123 858 96 96" fill="none" stroke="#fff" stroke-width="3"><path d="M139 928h19v9h-19zM154 910h19v9h-19zM169 892h19v9h-19zM184 874h19v9h-19z"/></svg>
        <svg class="size-8" viewBox="27 954 96 96" fill="none" stroke="#fff" stroke-width="3"><path stroke="#666" d="M49 976h52v51H49z"/><path d="M58 985l33 33"/><path stroke="#0c0" stroke-width="9" d="M54 985h9M87 1018h9"/></svg>
        <svg class="size-8" viewBox="123 954 96 96" fill="none" stroke="#fff" stroke-width="3"><path stroke="#666" d="M140 1015l20-21h43l-20 21z"/><path d="M169 973v57"/><path stroke="#0c0" stroke-width="9" d="M165 973h9M165 1030h9"/></svg>
        <svg class="size-8" viewBox="27 1050 96 96" fill="none" stroke="#fff" stroke-width="3"><path fill="#300" d="M46 1069h58v24H93v-12H58v12H46z"/><path fill="#003" d="M46 1126v-11h15v-12h27v12h16v11z"/></svg>
      </div>
      <div class="my-[6px] ml-[2px] h-1 w-[60px] bg-[#2d2d2d]"></div>
      <div class="grid w-16 grid-cols-2">
        <svg class="size-8" viewBox="27 1194 96 96" fill="none" stroke="#fff" stroke-width="3"><path d="M43 1222l21-12 20 12v12l22 12v13l-19 14-44-23zM43 1222l21 9 20-9M64 1231v13l22 12 20-10M64 1244l20-10M86 1256v17"/></svg>
        <svg class="size-8" viewBox="123 1194 96 96" fill="none" stroke="#fff" stroke-width="3"><path d="M145 1213h27v33h25v24h-52z"/></svg>
      </div>
    </div>
  </div>
</section>

<!-- SolveSpace property browser -->
<section class="absolute left-[29px] top-[445px] flex h-[417px] w-[378px] flex-col overflow-hidden border border-[#666] bg-black shadow-[0_5px_16px_rgba(0,0,0,0.45)]">
  <div class="flex h-[30px] shrink-0 items-center bg-white pl-2 text-[12px] text-black">
    <svg class="size-4"><use href="#solve"/></svg><span class="ml-[5px] tracking-[0.04px]">SolveSpace - Property Browser</span>
    <svg class="ml-auto mr-[10px] size-[10px]" viewBox="0 0 10 10"><path d="M0 0l10 10M10 0L0 10" stroke="#000" stroke-width="1.200"/></svg>
  </div>
  <div class="h-[25px] shrink-0 whitespace-pre pl-[15px] font-['Liberation_Mono'] text-[15px] leading-[28px]"><span class="text-[#66c2f5]">home</span>   <span class="text-[#ffbf66]">in plane:</span> <span class="text-white">g002-sketch-in-plane</span></div>
  <div class="flex h-8 shrink-0 items-center bg-[#1e1e1e] pl-4">
    <svg class="size-8 shrink-0" viewBox="79 183 96 96" fill="none" stroke="#fff" stroke-width="3"><path d="M101 202l34 10 13 47-35-11z"/><path stroke="#b41414" stroke-width="4" d="M90 192l75 75M165 192l-75 75"/></svg>
    <svg class="size-8 shrink-0" viewBox="175 183 96 96" fill="none" stroke="#008484" stroke-width="3"><path d="M210 260q2-35 20-60M213 209l17-10 6 19"/></svg>
    <svg class="size-8 shrink-0" viewBox="271 183 96 96"><path fill="#0c0" d="M309 222h18v18h-18z"/></svg>
    <svg class="size-8 shrink-0" viewBox="367 183 96 96" fill="none" stroke="#0c0" stroke-width="3"><circle cx="406" cy="217" r="19"/><path d="M385 259l58-21"/><path stroke-width="9" d="M402 217h9M381 259h9M438 238h9"/></svg>
    <svg class="size-8 shrink-0" viewBox="463 183 96 96" fill="none" stroke="#f0f" stroke-width="3"><path d="M480 233q29 0 32 25M491 244l7-9"/><text x="494" y="227" fill="#f0f" stroke="none" font-family="DejaVu Sans" font-size="26" textLength="48">74°</text></svg>
    <svg class="size-8 shrink-0" viewBox="559 183 96 96" fill="none" stroke-width="4"><path fill="#777" d="M590 203l14-6 6 4v30l28 6v12l-20 14-28-10z"/><path fill="#bbb000" d="M576 210h12v28l30 12v12h-24l-18-8z"/><path stroke="#b41414" d="M569 192l75 75M644 192l-75 75"/></svg>
    <i class="mx-1 h-6 w-1 shrink-0 bg-[#2e2e2e]"></i>
    <svg class="size-8 shrink-0" viewBox="690 183 96 96"><path fill="#666" d="M706 210l26-12 9 4v32l30 6v10l-20 14-45-8z"/><path fill="#999" d="M718 212l20-9v30l-20 8z"/></svg>
    <svg class="size-8 shrink-0" viewBox="786 183 96 96" fill="none" stroke="#fff" stroke-width="3"><path d="M802 207l26-11 9 4v32l31 6v10l-20 14-46-8zM802 207l10 4v32l36 7 20-12M812 211l25-11M812 243l25-11M848 250v12"/></svg>
    <svg class="size-8 shrink-0" viewBox="882 183 96 96" fill="none" stroke="#fff" stroke-width="5"><path d="M896 207l26-11 9 4v32l33 6v10l-18 14-48-8zM896 207l10 4v32l38 7 20-12M906 211l25-11M906 243l25-11"/><path stroke="#c41414" stroke-width="4" d="M893 192l75 75M968 192l-75 75"/></svg>
    <svg class="size-8 shrink-0" viewBox="978 183 96 96" fill="none" stroke="#0c0" stroke-width="3"><path fill="#253525" d="M993 207l26-11 9 4v32l33 6v10l-18 14-50-8zM993 207l10 4v32l38 7 20-12M1003 211l25-11M1003 243l25-11M993 207l10 36M1003 211l25 21M1003 243l-10 11M1028 232l15 18M1003 211v32M1015 200v30"/><path stroke="#b41414" stroke-width="4" d="M990 192l75 75M1065 192l-75 75"/></svg>
    <i class="mx-1 h-6 w-1 shrink-0 bg-[#2e2e2e]"></i>
    <svg class="size-8 shrink-0" viewBox="1110 183 96 96" fill="none" stroke="#fff" stroke-width="3"><path d="M1129 222l20-19h50v40l-20 16h-50zM1129 222h50"/></svg>
  </div>
  <div class="relative shrink-0 pt-[16px] font-['Liberation_Mono'] text-[15px] leading-5 text-[#66c2f5]">
    <div class="h-5 pl-[15px] pt-[2px] text-[#ffbf66]">active</div>
    <div class="h-5 whitespace-pre pl-[15px] pt-[2px] text-[#ffbf66]">   shown dof group-name</div>
    <div class="ml-[6px] flex h-5 items-center bg-[#181818] pl-[53px]"><svg class="mb-[2px] mr-[24px] size-[13px]" viewBox="0 0 13 13" fill="none" stroke="#ddd"><path stroke-width="2" d="M1 1h11v11H1z"/><path stroke-width="1.500" d="M3.500 6l2 2.500 4-5"/></svg><span class="w-9 pt-[2px] text-[#2f2]">ok</span><span class="pt-[2px]">g001-#references</span></div>
    <div class="flex h-5 items-center pl-[23px]"><svg class="mb-[2px] mr-[24px] size-3" viewBox="0 0 12 12"><circle cx="6" cy="6" r="5" fill="none" stroke="#ddd" stroke-width="1.600"/><circle cx="6" cy="6" r="1.700" fill="#ddd"/></svg><svg class="mb-[2px] mr-[24px] size-[13px]" viewBox="0 0 13 13" fill="none" stroke="#ddd"><path stroke-width="2" d="M1 1h11v11H1z"/><path stroke-width="1.500" d="M3.500 6l2 2.500 4-5"/></svg><span class="w-9 pt-[2px] text-[#2f2]">ok</span><span class="pt-[2px]">g002-sketch-in-plane</span></div>
    <div class="mt-[10px] h-5 pl-6 pt-[2px]">show all <span class="text-white">/</span> hide all</div>
    <div class="mt-[10px] h-5 pl-6 pt-[2px]">line styles <span class="text-white">/</span> view <span class="text-white">/</span> configuration</div>
    <i class="absolute left-[29px] top-[32px] h-[41px] w-px bg-[#ffb55a]"></i>
  </div>
</section>

<!-- Taskbar -->
<footer class="absolute left-0 top-[1040px] flex h-10 w-[1920px] bg-linear-to-r from-[#24363f] via-[#1c2b34] to-[#1c1e2a] text-white">
  <div class="flex w-12 items-center justify-center"><svg class="size-4" viewBox="0 0 16 16" fill="#fff"><path d="M0 2l7-1v6.500H0zM8 1l8-1v7.500H8zM0 8.500h7V15l-7-1zM8 8.500h8V16l-8-1z"/></svg></div>
  <div class="flex w-12 items-center justify-center"><svg class="size-[17px]" viewBox="0 0 17 17" fill="none" stroke="#fff" stroke-width="1.500"><circle cx="10.500" cy="6.500" r="5.700"/><path d="M6.500 10.500L.5 16.500"/></svg></div>
  <div class="ml-[7px] flex w-10 items-center justify-center border-b-2 border-[#76b9ed]"><svg class="h-5 w-[22px]" viewBox="0 0 22 20"><path fill="#e8a30c" d="M0 1h9l2 3h11v5H0z"/><path fill="#ffd866" d="M0 6h22v13H0z"/><path fill="#3a9bdc" d="M4 20v-9h14v9h-4v-5H8v5z"/></svg></div>
  <div class="ml-[5px] flex w-12 items-center justify-center"><svg class="size-6" viewBox="0 0 24 24"><defs><linearGradient id="e1"><stop stop-color="#35b8e8"/><stop offset="1" stop-color="#60e060"/></linearGradient></defs><circle cx="12" cy="12" r="12" fill="#0c6fc5"/><path fill="url(#e1)" d="M0 11A12 12 0 0 1 24 12q0 5-5 5-5 0-4-3 1-6-5-7-7 0-10 4z"/><path fill="#24363f" d="M11 11q-2 8 6 8 4 0 6-2-1 1-4 1-8-1-8-7z"/></svg></div>
  <div class="ml-px flex w-12 items-center justify-center"><svg class="size-6" viewBox="0 0 24 24" fill="none"><path stroke="#57c8f4" stroke-width="4.500" d="M6 13h13q0-8-7-8t-7 8q0 8 7 8 5 0 6.500-4"/><path stroke="#f7c52c" stroke-width="2" d="M2 22q-3-5 6-13T22 2q2 2-1 6"/></svg></div>
  <div class="ml-[5px] flex w-10 items-center justify-center border-b-2 border-[#76b9ed]"><svg class="size-[23px]" viewBox="0 0 24 24"><circle cx="12" cy="12" r="12" fill="#fbc116"/><path fill="#e33b2e" d="M12 12L1.600 6A12 12 0 0 1 22.400 6z"/><path fill="#269a4c" d="M12 12L1.600 6A12 12 0 0 0 12 24l5-9z"/><circle cx="12" cy="12" r="5.600" fill="#fff"/><circle cx="12" cy="12" r="4.300" fill="#1a73e8"/></svg></div>
  <div class="ml-[9px] flex w-10 items-center justify-center border-b-2 border-[#76b9ed]"><svg class="size-6" viewBox="0 0 24 24"><path fill="#ff4f3b" d="M2 5l3 2 3-4 1 4q4-1 6-7 1 4 5 6 4 4 3 9a11 11 0 0 1-22 0q-1-5 1-10z"/><path fill="#ffca28" d="M15 0q1 4 5 6 4 4 3 9-2 8-10 9 7-5 5-11-4-6-3-13z"/><circle cx="11.500" cy="13" r="5" fill="#7542e5"/><path fill="#ff9a2e" d="M4 9q5-2 9 1-3 1-4 3z"/></svg></div>
  <div class="ml-[9px] flex w-10 items-center justify-center border-b-2 border-[#76b9ed]"><span class="flex size-[23px] items-center justify-center bg-[#b40000] text-[18px] font-bold italic leading-none tracking-[-1px] font-['Liberation_Sans']">Fz</span></div>
  <div class="relative ml-[9px] flex w-10 items-center justify-center border-b-2 border-[#76b9ed]"><svg class="h-5 w-[22px]" viewBox="0 0 22 20"><path fill="#000" stroke="#aaa" d="M.5.500h21v19H.5z"/><path fill="#ccc" d="M1 1h20v2.500H1z"/><text x="2.500" y="10" font-size="5.500" fill="#fff" font-family="Liberation Mono">C:\_</text></svg><i class="absolute -bottom-[2px] right-0 h-[2px] w-2 bg-[#56809f]"></i></div>
  <div class="relative ml-[9px] flex w-10 items-center justify-center border-b-2 border-[#76b9ed]"><svg class="size-[23px]" viewBox="0 0 24 24" fill="none"><circle cx="12" cy="12" r="11.500" fill="#333"/><path stroke="#aaa" stroke-width="1" d="M3 6q4 10 18 12M5 4q4 9 18 10M8 2q4 7 15 8M12 1q3 4 9 5M1 9q4 11 17 12M1 14q3 7 12 9"/></svg><i class="absolute -bottom-[2px] right-0 h-[2px] w-2 bg-[#56809f]"></i></div>
  <div class="ml-[9px] flex w-10 items-center justify-center border-b-2 border-[#76b9ed]"><span class="flex h-6 w-6 border-b-[3px] border-l-[3px] border-[#0b9a9a] bg-[#901710]"><b class="m-auto pt-[3px] text-[12px] leading-none font-['Roboto']">NX</b></span></div>
  <div class="ml-[5px] flex w-12 items-center justify-center border-b-2 border-[#76b9ed] bg-[#4d5b65]"><svg class="size-6"><use href="#solve"/></svg></div>
  <div class="ml-auto flex items-center">
    <svg class="h-[14px] w-[74px]" viewBox="0 0 74 14" fill="none" stroke="#fff" stroke-width="1.200"><path d="M1 10l6-6 6 6M23 5h2l4-4v12l-4-4h-2z"/><circle cx="34" cy="10" r="4.500" fill="#e02b2b" stroke="none"/><path d="M32 8l4 4M36 8l-4 4M51 2h11v8H49M47 1h4v4h-4zM49 5v7.500M57 10v2.500M52 12.500h8"/></svg>
    <span class="ml-[-13px] w-[35px] text-center text-[13px] leading-none">中</span>
    <span class="ml-[4px] flex size-[14px] items-center justify-center bg-white text-[11px] leading-none text-black">ㄅ</span>
    <span class="ml-[13px] mr-px w-[66px] whitespace-nowrap text-center text-[12px] leading-[18px] tracking-[-0.150px]">下午 03:25<br>2022/10/28</span>
    <svg class="ml-4 h-4 w-4" viewBox="0 0 16 16"><path fill="#fff" d="M0 0h16v12h-5l-3 4-3-4H0z"/><path stroke="#1c1e2a" d="M3 3.500h10M3 6.500h10M3 9.500h6"/></svg>
    <i class="ml-[20px] mr-1 h-10 w-px bg-[#777b85]"></i>
  </div>
</footer>
</main>
</body>
</html>
